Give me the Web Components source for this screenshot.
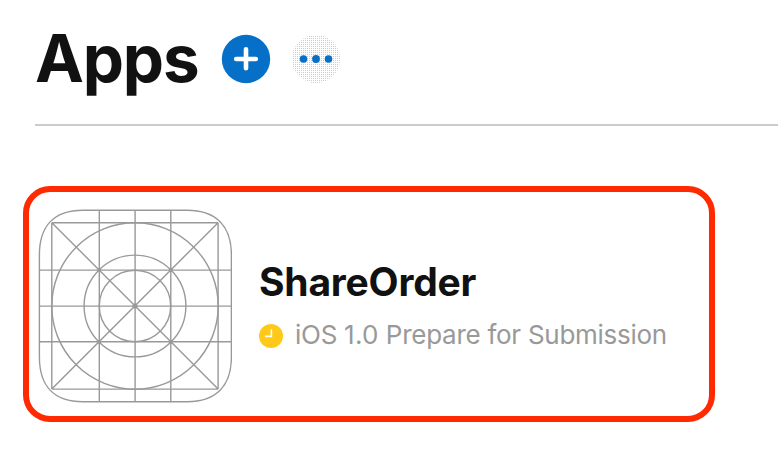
<!DOCTYPE html>
<html lang="en">
<head>
<meta charset="utf-8">
<title>Apps</title>
<style>
html,body{margin:0;background:#fff}
body{width:778px;height:453px;overflow:hidden;font-family:Inter,"Liberation Sans",sans-serif;color:#111}
</style>
</head>
<body>
<apps-page></apps-page>
<script>
const define = (name, html) => customElements.define(name, class extends HTMLElement {
  constructor() {
    super();
    this.attachShadow({ mode: 'open' }).innerHTML = html;
  }
});

define('add-button', `
<style>:host{display:block;width:50px;height:50px}svg{display:block}</style>
<svg width="50" height="50" viewBox="0 0 50 50">
  <circle cx="25" cy="25" r="24.2" fill="#0670c9"/>
  <path d="M15.2 25H34.8M25 15.2V34.2" stroke="#fff" stroke-width="4.6" stroke-linecap="round"/>
</svg>`);

define('more-button', `
<style>:host{display:block;width:50px;height:50px}svg{display:block}</style>
<svg width="50" height="50" viewBox="0 0 50 50">
  <defs><pattern id="dots" width="2" height="2" patternUnits="userSpaceOnUse">
    <rect width="2" height="2" fill="#fff"/><rect width="1" height="1" fill="#ccc"/>
  </pattern></defs>
  <circle cx="25" cy="25" r="24.2" fill="url(#dots)"/>
  <g fill="#0670c9"><circle cx="12.5" cy="25" r="3.8"/><circle cx="25" cy="25" r="3.9"/><circle cx="37.5" cy="25" r="3.8"/></g>
</svg>`);

define('page-header', `
<style>
:host{display:flex;margin-left:35px;border-bottom:2px solid #ccc;box-sizing:border-box;height:126px;align-items:flex-start}
h1{margin:19px 0 0;width:186px;font-size:65.5px;line-height:80px;font-weight:700;letter-spacing:-1.2px;white-space:nowrap}
.actions{display:flex;gap:20px;padding-top:34px}
</style>
<h1><slot></slot></h1>
<div class="actions"><add-button></add-button><more-button></more-button></div>`);

define('app-icon', `
<style>:host{display:block;width:194px;height:194px;flex:none}svg{display:block}</style>
<svg width="194" height="194" viewBox="38 209 194 194" fill="none" stroke="#999" stroke-width="1.4">
  <path d="M83 210.3H187C216 210.3 231.4 226 231.4 255V357C231.4 386 216 401.7 187 401.7H83C54 401.7 39.4 386 39.4 357V255C39.4 226 54 210.3 83 210.3Z"/>
  <path d="M51.8 222.7V389M99.3 210V402M135.1 210V402M170.8 210V402M218.1 222.7V389M51.8 222.7H218.1M39 270.1H231M39 306.1H231M39 341.7H231M51.8 389.1H218.1M51.8 222.7L218.1 389M218.1 222.7L51.8 389"/>
  <circle cx="135" cy="306" r="83.2"/><circle cx="135" cy="306" r="50.9"/><circle cx="135" cy="306" r="35.7"/>
  <g fill="#999" stroke="none"><circle cx="135" cy="306" r="2.6"/><circle cx="99.3" cy="270" r="2"/><circle cx="170.8" cy="270" r="2"/><circle cx="99.3" cy="341.8" r="2"/><circle cx="170.8" cy="341.8" r="2"/></g>
</svg>`);

define('pending-icon', `
<style>:host{display:block;width:24px;height:24px;flex:none}svg{display:block}</style>
<svg width="24" height="24" viewBox="0 0 24 24">
  <circle cx="12" cy="12" r="12" fill="#ffc91a"/>
  <path d="M12.4 5.2V12.4H6" fill="none" stroke="#fff" stroke-width="1.6"/>
</svg>`);

define('app-card', `
<style>
:host{display:flex;box-sizing:border-box;width:692px;height:236px;margin:60px 0 0 23px;border:6px solid #ff2a00;border-radius:27px;padding:17px 0 0 9px}
.info{margin-left:27px;padding-top:48px}
h2{margin:0;font-size:39px;line-height:50px;font-weight:700;letter-spacing:-.2px;white-space:nowrap}
.status{display:flex;align-items:center;gap:12px;margin-top:12px;height:34px;font-size:26px;line-height:34px;letter-spacing:-.27px;color:#999;white-space:nowrap}
.label{padding-bottom:2px}
</style>
<app-icon></app-icon>
<div class="info"><h2><slot name="name"></slot></h2>
<div class="status"><pending-icon></pending-icon><span class="label"><slot name="status"></slot></span></div></div>`);

define('apps-page', `
<style>:host{display:block;width:778px;height:453px;overflow:hidden}.version{letter-spacing:.3px}</style>
<page-header>Apps</page-header>
<app-card><span slot="name">ShareOrder</span><span slot="status">iOS <span class="version">1.0</span> Prepare for Submission</span></app-card>`);
</script>
</body>
</html>
